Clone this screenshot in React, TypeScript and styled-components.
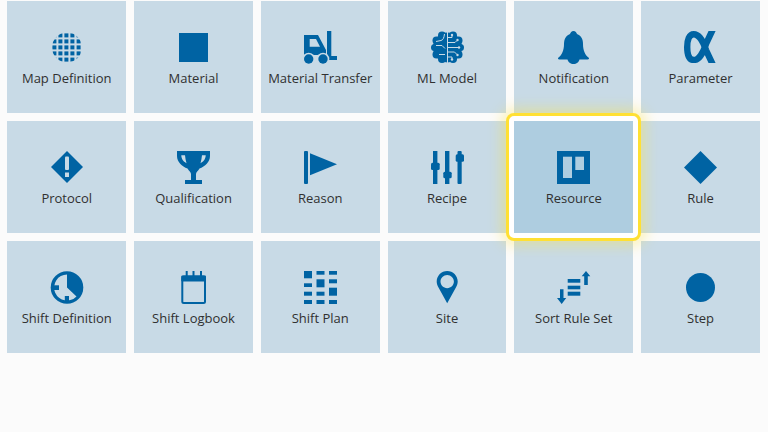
import React from 'react';
import styled, { createGlobalStyle } from 'styled-components';

const GlobalStyle = createGlobalStyle`
  html, body {
    margin: 0;
    padding: 0;
    background: #fbfbfb;
    font-family: 'Open Sans', sans-serif;
  }
`;

const Page = styled.div`
  width: 768px;
  height: 432px;
  overflow: hidden;
  box-sizing: border-box;
  padding: 1px 0 0 7.4px;
`;

const Grid = styled.div`
  display: grid;
  grid-template-columns: repeat(6, 118.75px);
  grid-auto-rows: 112px;
  gap: 8px;
`;

const Tile = styled.div<{ $selected?: boolean }>`
  --tile: ${(p) => (p.$selected ? '#aecde0' : '#c8dae6')};
  display: flex;
  flex-direction: column;
  align-items: center;
  padding-top: 30px;
  background: var(--tile);
  color: #0063a3;
  ${(p) =>
    p.$selected &&
    `
    position: relative;
    z-index: 1;
    margin: -5px;
    border: 5px solid #fff;
    border-radius: 5px;
    background-clip: padding-box;
    box-shadow: 0 0 0 3px #ffe033, 0 0 14px 7px rgba(255, 228, 60, 0.4);
  `}
`;

const IconBox = styled.svg`
  display: block;
  width: 33px;
  height: 33px;
  overflow: visible;
  fill: currentColor;
`;

const Label = styled.div`
  margin-top: 5px;
  font-size: 13px;
  line-height: 18px;
  color: #303030;
  white-space: nowrap;
`;

const MapIcon = () => {
  const cells = [2.4, 8.4, 14.4, 20.4, 26.6];
  return (
    <IconBox viewBox="0 0 33 33">
      <clipPath id="globe">
        <circle cx="17" cy="16.5" r="15" />
      </clipPath>
      <g clipPath="url(#globe)">
        {cells.map((y) =>
          cells.map((x) => <rect key={`${x}-${y}`} x={x} y={y} width="4" height="4" />)
        )}
      </g>
    </IconBox>
  );
};

const MaterialIcon = () => (
  <IconBox viewBox="0 0 33 33">
    <rect x="2" y="2" width="29" height="29" />
  </IconBox>
);

const ForkliftIcon = () => (
  <IconBox viewBox="0 0 33 33">
    <path
      fillRule="evenodd"
      d="M0 4H14L22 19V24H0ZM5.7 8V15.7H16L12 8Z"
    />
    <path d="M23 0H27.3V25H33V29H23Z" />
    <circle cx="4.7" cy="28" r="6.3" fill="var(--tile)" />
    <circle cx="19" cy="28" r="6.3" fill="var(--tile)" />
    <circle cx="4.7" cy="28" r="4.7" />
    <circle cx="19" cy="28" r="4.7" />
  </IconBox>
);

const BrainIcon = () => (
  <IconBox viewBox="0 0 33 33">
    <ellipse cx="16.5" cy="16.5" rx="14.5" ry="15" />
    <circle cx="11" cy="4.5" r="4" />
    <circle cx="22" cy="4.5" r="4" />
    <circle cx="5.5" cy="9.5" r="4" />
    <circle cx="27.5" cy="9.5" r="4" />
    <circle cx="3.5" cy="16.5" r="3.5" />
    <circle cx="29.5" cy="16.5" r="3.5" />
    <circle cx="5.5" cy="23.5" r="4" />
    <circle cx="27.5" cy="23.5" r="4" />
    <circle cx="11" cy="28" r="4" />
    <circle cx="22" cy="28" r="4" />
    <g fill="none" stroke="var(--tile)" strokeWidth="1">
      <path d="M16.5 1V32" />
      <path d="M16.5 6.5H21V4.5" />
      <path d="M16.5 11.5H24L26 9.5" />
      <path d="M16.5 16.5H27" />
      <path d="M16.5 21H23.5L26 23.5" />
      <path d="M16.5 26H21V28" />
      <path d="M5 10.5L10 9.5C12 9 13 7 13.5 3" />
      <path d="M5 14.5H11L14 17.5" />
      <path d="M8 23.5H14" />
    </g>
    <g fill="var(--tile)">
      <circle cx="21" cy="4" r="1.2" />
      <circle cx="26.5" cy="9" r="1.2" />
      <circle cx="28" cy="16.5" r="1.2" />
      <circle cx="26.5" cy="24" r="1.2" />
      <circle cx="21" cy="28.5" r="1.2" />
    </g>
  </IconBox>
);

const BellIcon = () => (
  <IconBox viewBox="0 0 33 33">
    <path d="M16.5 0C18.5 0 19.5 1.5 20 3C24 4.5 26 8 26 13C26 19 28 24 31.5 26.5C32.5 27.5 32 28.5 30.5 28.5H2.5C1 28.5 .5 27.5 1.5 26.5C5 24 7 19 7 13C7 8 9 4.5 13 3C13.5 1.5 14.5 0 16.5 0Z" />
    <path d="M10.5 28H22.5C22 31.5 19.5 33 16.5 33C13.5 33 11 31.5 10.5 28Z" />
  </IconBox>
);

const AlphaIcon = () => (
  <IconBox viewBox="0 0 33 33">
    <clipPath id="alpha-clip">
      <rect x="0" y="0" width="33" height="32" />
    </clipPath>
    <path
      clipPath="url(#alpha-clip)"
      fill="none"
      stroke="currentColor"
      strokeWidth="6.4"
      d="M29 -2L22 13C19.5 21 15 29 9.8 29C5 29 3.2 23 3.2 16C3.2 9 5 3.2 9.8 3.2C15 3.2 19.5 11 22 19L29 34"
    />
  </IconBox>
);

const ProtocolIcon = () => (
  <IconBox viewBox="0 0 33 33">
    <path d="M17 0L33 16L17 32L1 16Z" />
    <rect x="15" y="5.5" width="4" height="13.5" rx="1" fill="var(--tile)" />
    <rect x="15" y="21.5" width="4" height="4.5" fill="var(--tile)" />
  </IconBox>
);

const TrophyIcon = () => (
  <IconBox viewBox="0 0 33 33">
    <path
      fillRule="evenodd"
      d="M0 0H33V5C33 11 28 15.5 22.5 17.5C21 20 19 21 19 23V29H25V33H8V29H14V23C14 21 12 20 10.5 17.5C5 15.5 0 11 0 5ZM4.3 4.3C4.3 7 5.5 10 9.5 12.3C8.7 9.5 8.3 7 8 4.3ZM28.7 4.3H25C24.7 7 24.3 9.5 23.5 12.3C27.5 10 28.7 7 28.7 4.3Z"
    />
  </IconBox>
);

const FlagIcon = () => (
  <IconBox viewBox="0 0 33 33">
    <rect x="0" y="0" width="4" height="33" rx="1" />
    <path d="M6 2.3L33 13.3L6 24.3Z" />
  </IconBox>
);

const SlidersIcon = () => (
  <IconBox viewBox="0 0 33 33">
    <rect x="2" y="0" width="4.4" height="33" />
    <rect x="0" y="11.7" width="8.7" height="7.3" rx="1.5" />
    <rect x="14" y="0" width="4.4" height="33" />
    <rect x="12.3" y="20.7" width="8.4" height="6.6" rx="1.5" />
    <rect x="26.5" y="0" width="4.2" height="33" rx="1" />
    <rect x="24.7" y="3.3" width="8.3" height="7.4" rx="1.5" />
  </IconBox>
);

const BoardIcon = () => (
  <IconBox viewBox="0 0 33 33">
    <rect width="33" height="33" />
    <rect x="6" y="5.7" width="9" height="21.3" fill="var(--tile)" />
    <rect x="18.3" y="5.7" width="8.7" height="13.3" fill="var(--tile)" />
  </IconBox>
);

const DiamondIcon = () => (
  <IconBox viewBox="0 0 33 33">
    <path d="M16.5 0L33 16.5L16.5 33L0 16.5Z" />
  </IconBox>
);

const ClockIcon = () => (
  <IconBox viewBox="0 0 33 33">
    <circle cx="17" cy="16.5" r="16.3" />
    <path d="M17 16.5V3.5A13 13 0 1 0 26.5 25.5Z" fill="var(--tile)" />
    <rect x="3.5" y="14.3" width="5.5" height="4.7" />
    <rect x="14.8" y="25" width="4.2" height="5" />
  </IconBox>
);

const CalendarIcon = () => (
  <IconBox viewBox="0 0 33 33">
    <rect x="5.3" y="5.5" width="22.7" height="26.5" rx="1.5" fill="none" stroke="currentColor" strokeWidth="2" />
    <rect x="4.3" y="4.5" width="24.7" height="6" rx="1" />
    <rect x="8.7" y="0" width="2" height="5" />
    <rect x="15.5" y="0" width="2" height="5" />
    <rect x="23" y="0" width="2" height="5" />
  </IconBox>
);

const PLAN_CELLS = [
  [0, 0, 7.3], [0, 12.3, 3.7], [0, 20.7, 4], [0, 29, 4],
  [12.5, 0, 3.7], [12.5, 8.3, 8], [12.5, 20.7, 4], [12.5, 29, 4],
  [25, 0, 3.7], [25, 8.3, 4], [25, 16.7, 8], [25, 29, 4],
];

const PlanIcon = () => (
  <IconBox viewBox="0 0 33 33">
    {PLAN_CELLS.map(([x, y, h]) => (
      <rect key={`${x}-${y}`} x={x} y={y} width="8" height={h} />
    ))}
  </IconBox>
);

const PinIcon = () => (
  <IconBox viewBox="0 0 33 33">
    <path
      fillRule="evenodd"
      d="M16.2 32.3L7.5 16.5C6.3 14.5 5.7 12.7 5.7 10.5C5.7 4.7 10.4 0 16.2 0C22 0 26.7 4.7 26.7 10.5C26.7 12.7 26.1 14.5 24.9 16.5ZM16.2 4C12.5 4 9.5 7 9.5 10.6C9.5 14.2 12.5 17.2 16.2 17.2C19.9 17.2 22.9 14.2 22.9 10.6C22.9 7 19.9 4 16.2 4Z"
    />
  </IconBox>
);

const SortIcon = () => (
  <IconBox viewBox="0 0 33 33">
    <rect x="10.7" y="8" width="12.6" height="3.7" />
    <rect x="10.7" y="14.7" width="12.6" height="3.6" />
    <rect x="10.7" y="20.7" width="12.6" height="4" />
    <path d="M29 0L33.3 5.3H30.8V14H27.2V5.3H24.7Z" />
    <path d="M4.7 33L0 27H3V18.3H6.5V27H9.2Z" />
  </IconBox>
);

const CircleIcon = () => (
  <IconBox viewBox="0 0 33 33">
    <circle cx="16.5" cy="16.5" r="14.5" />
  </IconBox>
);

const items = [
  { label: 'Map Definition', Icon: MapIcon },
  { label: 'Material', Icon: MaterialIcon },
  { label: 'Material Transfer', Icon: ForkliftIcon },
  { label: 'ML Model', Icon: BrainIcon },
  { label: 'Notification', Icon: BellIcon },
  { label: 'Parameter', Icon: AlphaIcon },
  { label: 'Protocol', Icon: ProtocolIcon },
  { label: 'Qualification', Icon: TrophyIcon },
  { label: 'Reason', Icon: FlagIcon },
  { label: 'Recipe', Icon: SlidersIcon },
  { label: 'Resource', Icon: BoardIcon, selected: true },
  { label: 'Rule', Icon: DiamondIcon },
  { label: 'Shift Definition', Icon: ClockIcon },
  { label: 'Shift Logbook', Icon: CalendarIcon },
  { label: 'Shift Plan', Icon: PlanIcon },
  { label: 'Site', Icon: PinIcon },
  { label: 'Sort Rule Set', Icon: SortIcon },
  { label: 'Step', Icon: CircleIcon },
];

export default function App() {
  return (
    <Page>
      <GlobalStyle />
      <Grid>
        {items.map(({ label, Icon, selected }) => (
          <Tile key={label} $selected={selected}>
            <Icon />
            <Label>{label}</Label>
          </Tile>
        ))}
      </Grid>
    </Page>
  );
}
